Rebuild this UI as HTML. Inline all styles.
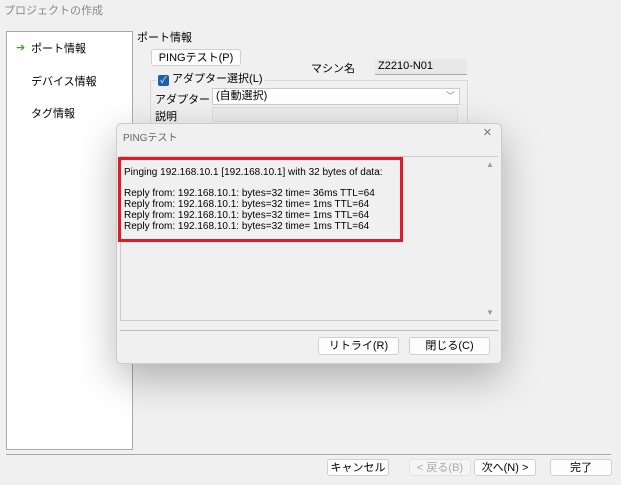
<!DOCTYPE html>
<html><head><meta charset="utf-8"><style>
*{margin:0;padding:0;box-sizing:border-box}
body{width:621px;height:485px;background:#f0f0f0;font-family:"Liberation Sans","Noto Sans CJK JP",sans-serif;font-size:11px;color:#000;position:relative;overflow:hidden}
.a{position:absolute;white-space:nowrap}
.btn{position:absolute;background:#fdfdfd;border:1px solid #d0d0d0;border-radius:3px;text-align:center;font-size:11px;line-height:16px}
</style></head><body>
<div class="a" style="left:4px;top:2px;color:#888;font-size:11px">プロジェクトの作成</div>
<div class="a" style="left:6px;top:31px;width:127px;height:419px;background:#fff;border:1px solid #aaa"></div>
<div class="a" style="left:16px;top:41px;color:#4a9a3a;font-size:11px">➔</div>
<div class="a" style="left:31px;top:40px">ポート情報</div>
<div class="a" style="left:31px;top:73px">デバイス情報</div>
<div class="a" style="left:31px;top:105px">タグ情報</div>
<div class="a" style="left:137px;top:29px">ポート情報</div>
<div class="btn" style="left:151px;top:49px;width:90px;height:17px">PINGテスト(P)</div>
<div class="a" style="left:311px;top:60px">マシン名</div>
<div class="a" style="left:375px;top:59px;width:92px;height:16px;background:#e8e8e8;border-bottom:1px solid #aaa;padding-left:3px;line-height:14px">Z2210-N01</div>
<div class="a" style="left:150px;top:80px;width:318px;height:60px;border:1px solid #d8d8d8"></div>
<div class="a" style="left:156px;top:72px;background:#f0f0f0;padding:0 2px;line-height:14px"><span style="display:inline-block;width:11px;height:11px;background:#1a5fb4;border-radius:2px;color:#fff;font-size:9px;line-height:11px;text-align:center;vertical-align:-1px">✓</span> アダプター選択(L)</div>
<div class="a" style="left:155px;top:91px">アダプター</div>
<div class="a" style="left:212px;top:88px;width:248px;height:17px;background:#fff;border:1px solid #ccc;padding-left:3px;line-height:15px">(自動選択)<span style="position:absolute;right:4px;color:#777;font-size:9px">﹀</span></div>
<div class="a" style="left:155px;top:108px">説明</div>
<div class="a" style="left:212px;top:107px;width:246px;height:15px;background:#ececec;border:1px solid #ddd"></div>
<div class="a" style="left:6px;top:454px;width:605px;height:1px;background:#aaa"></div>
<div class="btn" style="left:327px;top:459px;width:62px;height:17px">キャンセル</div>
<div class="btn" style="left:409px;top:459px;width:62px;height:17px;color:#aaa;background:#f5f5f5;border-color:#e4e4e4">&lt; 戻る(B)</div>
<div class="btn" style="left:474px;top:459px;width:62px;height:17px">次へ(N) &gt;</div>
<div class="btn" style="left:550px;top:459px;width:62px;height:17px">完了</div>
<div class="a" style="left:116px;top:123px;width:386px;height:241px;background:#f0f0f0;border:1px solid #ccc;border-radius:5px;box-shadow:0 14px 40px rgba(0,0,0,.28)"></div>
<div class="a" style="left:123px;top:129px;color:#666;font-size:10px">PINGテスト</div>
<div class="a" style="left:483px;top:124px;color:#777;font-size:15px">×</div>
<div class="a" style="left:120px;top:156px;width:378px;height:165px;background:#f0f0f0;border:1px solid #ccc;border-right:none"></div>
<div class="a" style="left:486px;top:160px;color:#999;font-size:8px">▲</div>
<div class="a" style="left:486px;top:308px;color:#999;font-size:8px">▼</div>
<div class="a" style="left:118px;top:157px;width:285px;height:85px;border:3px solid #e3192a"></div>
<div class="a" style="left:124px;top:168px;font-size:10px;line-height:10.7px">Pinging 192.168.10.1 [192.168.10.1] with 32 bytes of data:<br><br>Reply from: 192.168.10.1: bytes=32 time= 36ms TTL=64<br>Reply from: 192.168.10.1: bytes=32 time= 1ms TTL=64<br>Reply from: 192.168.10.1: bytes=32 time= 1ms TTL=64<br>Reply from: 192.168.10.1: bytes=32 time= 1ms TTL=64</div>
<div class="a" style="left:120px;top:330px;width:378px;height:1px;background:#bbb"></div>
<div class="btn" style="left:318px;top:337px;width:81px;height:18px">リトライ(R)</div>
<div class="btn" style="left:409px;top:337px;width:81px;height:18px">閉じる(C)</div>
</body></html>
